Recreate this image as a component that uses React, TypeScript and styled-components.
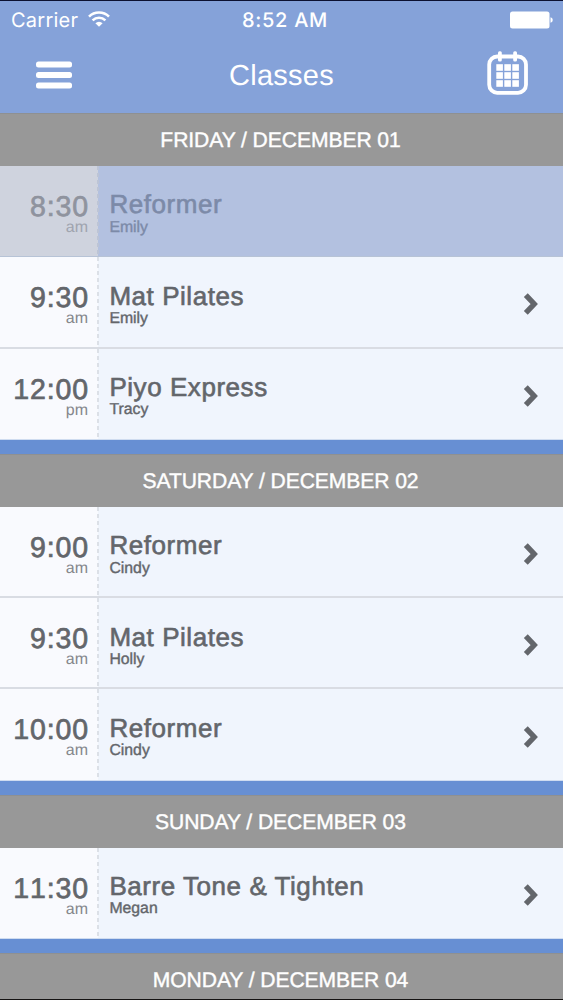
import React from 'react';
import styled, { createGlobalStyle } from 'styled-components';

const GlobalStyle = createGlobalStyle`
  * { box-sizing: border-box; }
  html, body { margin: 0; padding: 0; }
  body {
    background: #678fd3;
    overflow: hidden;
    font-family: 'Liberation Sans', Arial, sans-serif;
    text-rendering: geometricPrecision;
    -webkit-font-smoothing: antialiased;
  }
`;

const Screen = styled.div`
  width: 563px;
  height: 1000px;
  overflow: hidden;
  border-top: 1px solid #0b1030;
  border-bottom: 1px solid #151313;
  background: #678fd3;
`;

const Header = styled.header`
  height: 112.4px;
  background: #85a2d9;
  color: #fff;
`;

const StatusBar = styled.div`
  height: 37px;
  display: grid;
  grid-template-columns: 1fr auto 1fr;
  align-items: center;
  padding: 0 11px;
  font-family: Inter, sans-serif;
  font-size: 20px;
`;

const Carrier = styled.div`
  display: flex;
  align-items: center;
  gap: 9.5px;
  letter-spacing: 0.25px;
`;

const WifiGlyph = styled.svg`
  margin-top: -2px;
`;

const Clock = styled.div`
  font-weight: 500;
  letter-spacing: 0.7px;
  padding-left: 7px;
`;

const Battery = styled.svg`
  justify-self: end;
  margin-right: -1px;
`;

const NavBar = styled.div`
  height: 75px;
  display: grid;
  grid-template-columns: 1fr auto 1fr;
  align-items: center;
  padding: 0 35px 0 36px;
`;

const Title = styled.h1`
  margin: 0 1px 0 0;
  font-size: 29px;
  font-weight: 400;
  line-height: 32px;
  letter-spacing: 0.25px;
`;

const MenuIcon = styled.svg`
  display: block;
  margin-top: -1px;
`;

const CalendarIcon = styled.svg`
  display: block;
  justify-self: end;
  margin-top: -5px;
`;

const Day = styled.section`
  margin-bottom: 14.4px;
`;

const DayHeading = styled.h2`
  margin: 0;
  height: 52.6px;
  display: flex;
  align-items: center;
  justify-content: center;
  background: #989898;
  border-top: 1px solid #8e9092;
  color: #fff;
  font-size: 21.1px;
  font-weight: 400;
  letter-spacing: -0.08px;
  padding: 2.5px 2px 0 0;
  -webkit-text-stroke: 0.4px #fff;
`;

const Row = styled.div<{ $past?: boolean }>`
  height: 91.3px;
  display: flex;
  color: ${(p) => (p.$past ? '#7c8aa8' : '#63666b')};
  background: ${(p) => (p.$past ? '#b3c1e0' : '#f0f5fd')};
  border-bottom: ${(p) => (p.$past ? '1px solid #b7c3d6' : '2px solid #d9dce3')};
  &:last-child { border-bottom: 1px solid #cfdcf0; }
`;

const TimeCell = styled.div<{ $past?: boolean }>`
  width: 98px;
  flex: none;
  display: flex;
  flex-direction: column;
  align-items: flex-end;
  padding: 27px 9px 0 0;
  background: ${(p) => (p.$past ? '#cfd3de' : '#f9fafe')};
  color: ${(p) => (p.$past ? '#8f939e' : 'inherit')};
`;

const Divider = styled.div<{ $past?: boolean }>`
  width: 2px;
  flex: none;
  margin-left: -1px;
  background: repeating-linear-gradient(
    to bottom,
    ${(p) => (p.$past ? '#bcc4d6' : '#dce0e7')} 0 4px,
    transparent 4px 7px
  );
`;

const Hour = styled.div`
  font-size: 28.5px;
  line-height: 28px;
  letter-spacing: 0.9px;
  font-kerning: none;
  -webkit-text-stroke: 0.7px currentColor;
`;

const Meridiem = styled.div<{ $past?: boolean }>`
  font-size: 16px;
  line-height: 14px;
  margin: 0 1px 0 0;
  color: ${(p) => (p.$past ? '#a0a4af' : '#85878c')};
`;

const Details = styled.div`
  flex: 1;
  padding: 25.4px 0 0 10.4px;
`;

const ClassName = styled.div`
  font-size: 26px;
  line-height: 26px;
  letter-spacing: 0.55px;
  -webkit-text-stroke: 0.6px currentColor;
`;

const Instructor = styled.div`
  font-size: 15.8px;
  line-height: 16px;
  margin-top: 2.3px;
  -webkit-text-stroke: 0.4px currentColor;
`;

const Chevron = styled.svg`
  flex: none;
  align-self: center;
  margin: 4px 24px 0 0;
`;

type Session = { time: string; half: 'am' | 'pm'; name: string; by: string; past?: boolean };

const schedule: { label: string; sessions: Session[] }[] = [
  {
    label: 'FRIDAY / DECEMBER 01',
    sessions: [
      { time: '8:30', half: 'am', name: 'Reformer', by: 'Emily', past: true },
      { time: '9:30', half: 'am', name: 'Mat Pilates', by: 'Emily' },
      { time: '12:00', half: 'pm', name: 'Piyo Express', by: 'Tracy' },
    ],
  },
  {
    label: 'SATURDAY / DECEMBER 02',
    sessions: [
      { time: '9:00', half: 'am', name: 'Reformer', by: 'Cindy' },
      { time: '9:30', half: 'am', name: 'Mat Pilates', by: 'Holly' },
      { time: '10:00', half: 'am', name: 'Reformer', by: 'Cindy' },
    ],
  },
  {
    label: 'SUNDAY / DECEMBER 03',
    sessions: [{ time: '11:30', half: 'am', name: 'Barre Tone & Tighten', by: 'Megan' }],
  },
  { label: 'MONDAY / DECEMBER 04', sessions: [] },
];

function WifiIcon() {
  return (
    <WifiGlyph width="22" height="16" viewBox="0 0 22 16" fill="none" stroke="#fff" strokeWidth="2.6">
      <path d="M1 5.6a14.4 14.4 0 0 1 20 0" />
      <path d="M4.6 9.4a9.2 9.2 0 0 1 12.8 0" />
      <path d="M7.4 12.2a5 5 0 0 1 7.2 0L11 15.8z" fill="#fff" stroke="none" />
    </WifiGlyph>
  );
}

function ClassRow({ session }: { session: Session }) {
  const { time, half, name, by, past } = session;
  return (
    <Row $past={past}>
      <TimeCell $past={past}>
        <Hour>{time}</Hour>
        <Meridiem $past={past}>{half}</Meridiem>
      </TimeCell>
      <Divider $past={past} />
      <Details>
        <ClassName>{name}</ClassName>
        <Instructor>{by}</Instructor>
      </Details>
      {!past && (
        <Chevron
          width="16"
          height="24"
          viewBox="0 0 16 24"
          fill="none"
          stroke="#63666b"
          strokeWidth="5.4"
        >
          <path d="M2.8 3.2 11.2 12l-8.4 8.8" />
        </Chevron>
      )}
    </Row>
  );
}

export default function App() {
  return (
    <Screen>
      <GlobalStyle />
      <Header>
        <StatusBar>
          <Carrier>
            <span>Carrier</span>
            <WifiIcon />
          </Carrier>
          <Clock>8:52 AM</Clock>
          <Battery width="43" height="18" viewBox="0 0 43 18" fill="#fff">
            <rect x="0" y="0.5" width="39.5" height="17" rx="2.5" />
            <path d="M40.5 6.2c1.5.4 2.2 1.5 2.2 2.8s-.7 2.4-2.2 2.8z" />
          </Battery>
        </StatusBar>
        <NavBar>
          <MenuIcon width="36" height="28" viewBox="0 0 36 28" fill="#fff">
            <rect x="0" y="0.5" width="36" height="6" rx="2.5" />
            <rect x="0" y="11" width="36" height="6" rx="2.5" />
            <rect x="0" y="21.5" width="36" height="6" rx="2.5" />
          </MenuIcon>
          <Title>Classes</Title>
          <CalendarIcon width="41" height="44" viewBox="0 0 41 44" fill="#fff">
            <rect x="2.2" y="5.5" width="36.8" height="36.3" rx="8" fill="none" stroke="#fff" strokeWidth="3.8" />
            <rect x="11" y="0.3" width="3.8" height="10.2" rx="1.5" />
            <rect x="26.2" y="0.3" width="3.8" height="10.2" rx="1.5" />
            {[13.2, 21.2, 29.2].map((y) =>
              [9.3, 17.3, 25.3].map((x) => <rect key={`${x}-${y}`} x={x} y={y} width="6.6" height="6.6" />),
            )}
          </CalendarIcon>
        </NavBar>
      </Header>
      {schedule.map((day) => (
        <Day key={day.label}>
          <DayHeading>{day.label}</DayHeading>
          {day.sessions.map((s) => (
            <ClassRow key={s.time} session={s} />
          ))}
        </Day>
      ))}
    </Screen>
  );
}
